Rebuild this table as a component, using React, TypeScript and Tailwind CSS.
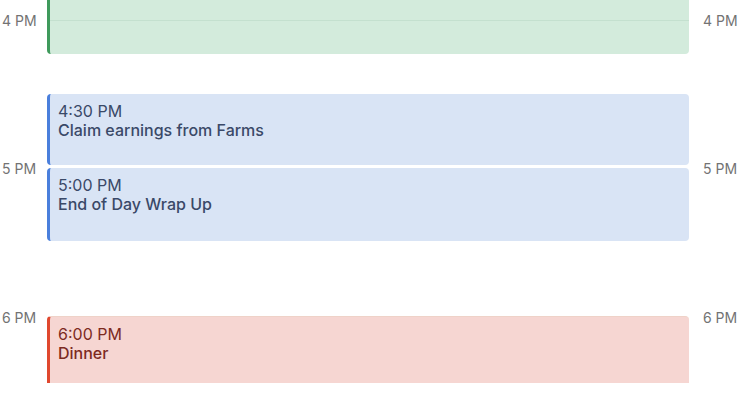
import React from 'react';

type Tone = 'green' | 'blue' | 'red';

const TONES: Record<Tone, { box: string; text: string }> = {
  green: { box: 'bg-[#d3ebdc] border-[#3f9a5c]', text: 'text-[#2f5a3f]' },
  blue: { box: 'bg-[#d9e4f5] border-[#4a7fdc]', text: 'text-[#3a4968]' },
  red: { box: 'bg-[#f6d6d2] border-[#e0482f]', text: 'text-[#7d2a1f]' },
};

function HourLabels({ align }: { align: 'left' | 'right' }) {
  const pad = align === 'left' ? 'pl-[2px]' : 'pl-[3px]';
  return (
    <div className={`flex flex-col pt-[13px] text-[14px] leading-[16px] text-[#737373] ${pad}`}>
      <span>4 PM</span>
      <span className="mt-[132px]">5 PM</span>
      <span className="mt-[133px]">6 PM</span>
    </div>
  );
}

function EventBlock({
  tone,
  time,
  title,
  className,
}: {
  tone: Tone;
  time?: string;
  title?: string;
  className: string;
}) {
  const t = TONES[tone];
  return (
    <div className={`shrink-0 border-l-[3px] pl-[8px] pt-[8px] ${t.box} ${className}`}>
      {time && (
        <div className={`text-[16px] leading-[19px] ${t.text}`}>{time}</div>
      )}
      {title && (
        <div className={`text-[16px] leading-[19px] font-medium ${t.text}`}>{title}</div>
      )}
    </div>
  );
}

export default function App() {
  return (
    <div
      className="flex h-[409px] w-[754px] overflow-hidden bg-white"
      style={{ fontFamily: 'Inter, "Liberation Sans", Arial, sans-serif' }}
    >
      <div className="w-[47px] shrink-0">
        <HourLabels align="left" />
      </div>

      <div className="flex h-[383px] w-[642px] shrink-0 flex-col overflow-hidden">
        {/* 3:30 – 4:15 block, top is scrolled off */}
        <div className="flex h-[54px] shrink-0 flex-col rounded-b-[4px] border-l-[3px] border-[#3f9a5c] bg-[#d3ebdc]">
          <div className="mt-[20px] h-px bg-[#c4e0cf]" />
        </div>

        <EventBlock
          tone="blue"
          time="4:30 PM"
          title="Claim earnings from Farms"
          className="mt-[40px] h-[71px] rounded-[4px]"
        />
        <div className="h-[3px] shrink-0 bg-white" />
        <EventBlock
          tone="blue"
          time="5:00 PM"
          title="End of Day Wrap Up"
          className="h-[73px] rounded-[4px]"
        />

        <EventBlock
          tone="red"
          time="6:00 PM"
          title="Dinner"
          className="mt-[75px] h-[70px] rounded-t-[4px] border-t border-t-[#efd2c8]"
        />
      </div>

      <div className="flex-1 pl-[11px]">
        <HourLabels align="right" />
      </div>
    </div>
  );
}
